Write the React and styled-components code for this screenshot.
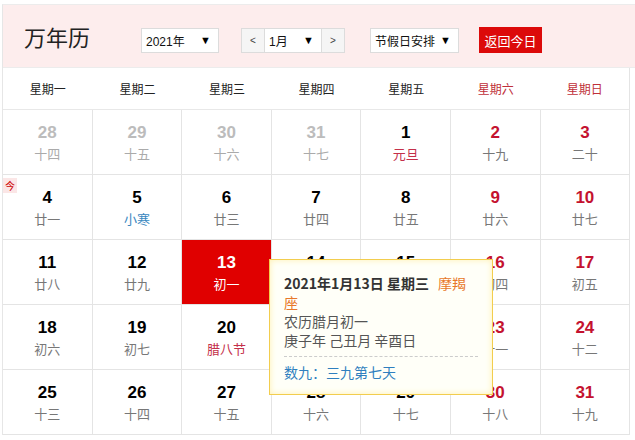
import React from "react";
import styled, { createGlobalStyle } from "styled-components";

const GlobalStyle = createGlobalStyle`
  html, body {
    margin: 0;
    padding: 0;
    background: #fff;
    overflow: hidden;
  }
  body {
    font-family: "Liberation Sans", "Noto Sans CJK SC", sans-serif;
  }
`;

const weekdays = [
  { label: "星期一" },
  { label: "星期二" },
  { label: "星期三" },
  { label: "星期四" },
  { label: "星期五" },
  { label: "星期六", weekend: true },
  { label: "星期日", weekend: true },
];

// kind: "fest" = festival, "term" = solar term
const weeks = [
  [
    { d: 28, l: "十四", other: true },
    { d: 29, l: "十五", other: true },
    { d: 30, l: "十六", other: true },
    { d: 31, l: "十七", other: true },
    { d: 1, l: "元旦", kind: "fest" },
    { d: 2, l: "十九" },
    { d: 3, l: "二十" },
  ],
  [
    { d: 4, l: "廿一" },
    { d: 5, l: "小寒", kind: "term" },
    { d: 6, l: "廿三" },
    { d: 7, l: "廿四" },
    { d: 8, l: "廿五" },
    { d: 9, l: "廿六" },
    { d: 10, l: "廿七" },
  ],
  [
    { d: 11, l: "廿八" },
    { d: 12, l: "廿九" },
    { d: 13, l: "初一", today: true },
    { d: 14, l: "初二" },
    { d: 15, l: "初三" },
    { d: 16, l: "初四" },
    { d: 17, l: "初五" },
  ],
  [
    { d: 18, l: "初六" },
    { d: 19, l: "初七" },
    { d: 20, l: "腊八节", kind: "fest" },
    { d: 21, l: "初九" },
    { d: 22, l: "初十" },
    { d: 23, l: "十一" },
    { d: 24, l: "十二" },
  ],
  [
    { d: 25, l: "十三" },
    { d: 26, l: "十四" },
    { d: 27, l: "十五" },
    { d: 28, l: "十六" },
    { d: 29, l: "十七" },
    { d: 30, l: "十八" },
    { d: 31, l: "十九" },
  ],
];

const App = () => {
  return (
    <>
      <GlobalStyle />
      <Wrapper>
        <Header>
          <Title>万年历</Title>
          <Controls>
            <Select $width={78}>
              <span>2021年</span>
              <Arrow>▼</Arrow>
            </Select>
            <MonthGroup>
              <NavButton>&lt;</NavButton>
              <Select $width={56} $joined>
                <span>1月</span>
                <Arrow>▼</Arrow>
              </Select>
              <NavButton>&gt;</NavButton>
            </MonthGroup>
            <Select $width={89}>
              <span>节假日安排</span>
              <Arrow>▼</Arrow>
            </Select>
            <TodayButton>返回今日</TodayButton>
          </Controls>
        </Header>
        <Grid>
          {weekdays.map((w) => (
            <Weekday key={w.label} $weekend={w.weekend}>
              {w.label}
            </Weekday>
          ))}
          {weeks.map((week, wi) =>
            week.map((day, di) => (
              <Cell key={`${wi}-${di}`} $today={day.today}>
                {wi === 1 && di === 0 && <TodayMark>今</TodayMark>}
                <DayNum $other={day.other} $weekend={di >= 5} $today={day.today}>
                  {day.d}
                </DayNum>
                <Lunar $other={day.other} $kind={day.kind} $today={day.today}>
                  {day.l}
                </Lunar>
              </Cell>
            ))
          )}
        </Grid>
        <Tip>
          <TipTitle>
            2021年1月13日 星期三<Star>摩羯座</Star>
          </TipTitle>
          <TipLine>农历腊月初一</TipLine>
          <TipLine>庚子年 己丑月 辛酉日</TipLine>
          <TipSep />
          <TipNine>数九：三九第七天</TipNine>
        </Tip>
      </Wrapper>
    </>
  );
};

export default App;

const Wrapper = styled.div`
  position: relative;
  margin: 4px 0 0 2px;
  width: 680px;
  border-top: 1px solid #ececec;
  border-left: 1px solid #e6e6e6;
`;

const Header = styled.div`
  height: 62px;
  background: #fdeded;
  border-bottom: 1px solid #ececec;
  display: flex;
  align-items: center;
  padding-left: 21px;
`;

const Title = styled.h1`
  margin: 0;
  width: 117px;
  font-family: "Noto Sans CJK SC", sans-serif;
  font-size: 22px;
  font-weight: 400;
  color: #222;
  line-height: 28px;
  margin-top: -1px;
`;

const Controls = styled.div`
  display: flex;
  align-items: center;
  margin-top: 8px;
  gap: 22px;
`;

const MonthGroup = styled.div`
  display: flex;
  margin-right: 3px;
`;

const Select = styled.div`
  box-sizing: border-box;
  width: ${(p) => p.$width}px;
  height: 25px;
  background: #fff;
  border: 1px solid #dcdcdc;
  border-left: ${(p) => (p.$joined ? "none" : "1px solid #dcdcdc")};
  border-right: ${(p) => (p.$joined ? "none" : "1px solid #dcdcdc")};
  display: flex;
  align-items: center;
  justify-content: space-between;
  padding: 0 7px 0 4px;
  font-family: "Liberation Sans", "Noto Sans CJK SC", sans-serif;
  font-size: 12px;
  color: #111;
`;

const Arrow = styled.span`
  font-size: 11px;
  color: #000;
`;

const NavButton = styled.div`
  box-sizing: border-box;
  width: 24px;
  height: 25px;
  background: #f5f5f5;
  border: 1px solid #dcdcdc;
  display: flex;
  align-items: center;
  justify-content: center;
  font-size: 10px;
  color: #444;
`;

const TodayButton = styled.div`
  box-sizing: border-box;
  width: 63px;
  height: 26px;
  margin-left: -2px;
  background: #dc0a0a;
  color: #fff;
  display: flex;
  align-items: center;
  justify-content: center;
  font-family: "Noto Sans CJK SC", sans-serif;
  font-size: 13px;
`;

const Grid = styled.div`
  display: grid;
  grid-template-columns: repeat(7, 89.6px);
  grid-template-rows: 42px repeat(5, 65px);
  width: 627px;
`;

const Weekday = styled.div`
  display: flex;
  align-items: center;
  justify-content: center;
  border-bottom: 1px solid #e8e8e8;
  font-family: "Noto Sans CJK SC", sans-serif;
  font-size: 12px;
  color: ${(p) => (p.$weekend ? "#c0303a" : "#222")};
  &:nth-child(7) {
    border-right: 1px solid #e4e4e4;
  }
`;

const Cell = styled.div`
  position: relative;
  box-sizing: border-box;
  border-right: 1px solid #e4e4e4;
  border-bottom: 1px solid #e4e4e4;
  background: ${(p) => (p.$today ? "#e00000" : "#fff")};
  display: flex;
  flex-direction: column;
  align-items: center;
  padding-top: 12px;
`;

const DayNum = styled.div`
  font-family: "Liberation Sans", sans-serif;
  font-weight: bold;
  font-size: 17px;
  line-height: 22px;
  color: ${(p) =>
    p.$today ? "#fff" : p.$other ? "#bcbcbc" : p.$weekend ? "#c4122f" : "#000"};
`;

const Lunar = styled.div`
  font-family: "Noto Sans CJK SC", sans-serif;
  font-size: 13px;
  line-height: 20px;
  margin-top: 0;
  color: ${(p) =>
    p.$today
      ? "#fff"
      : p.$kind === "fest"
      ? "#c4304a"
      : p.$kind === "term"
      ? "#3a88bf"
      : p.$other
      ? "#aaa"
      : "#777"};
`;

const TodayMark = styled.span`
  position: absolute;
  left: 0;
  top: 3px;
  width: 14px;
  height: 15px;
  background: #fbe6e6;
  color: #c00;
  font-family: "Noto Sans CJK SC", sans-serif;
  font-size: 10px;
  line-height: 15px;
  text-align: center;
`;

const Tip = styled.div`
  position: absolute;
  left: 266px;
  top: 254px;
  box-sizing: border-box;
  width: 224px;
  height: 136px;
  padding: 14px 14px 0 14px;
  background: #fffff8;
  border: 1px solid #f2cd4e;
  box-shadow: inset 0 0 6px #fff0b0;
  font-family: "Noto Sans CJK SC", sans-serif;
  font-size: 14px;
  line-height: 19px;
  color: #555;
`;

const TipTitle = styled.div`
  font-weight: bold;
  color: #333;
`;

const Star = styled.span`
  font-weight: normal;
  color: #e8782a;
  margin-left: 9px;
`;

const TipLine = styled.div``;

const TipSep = styled.div`
  margin: 6px 0 6px;
  border-top: 1px dashed #ccc;
`;

const TipNine = styled.div`
  color: #2f7fbf;
`;
